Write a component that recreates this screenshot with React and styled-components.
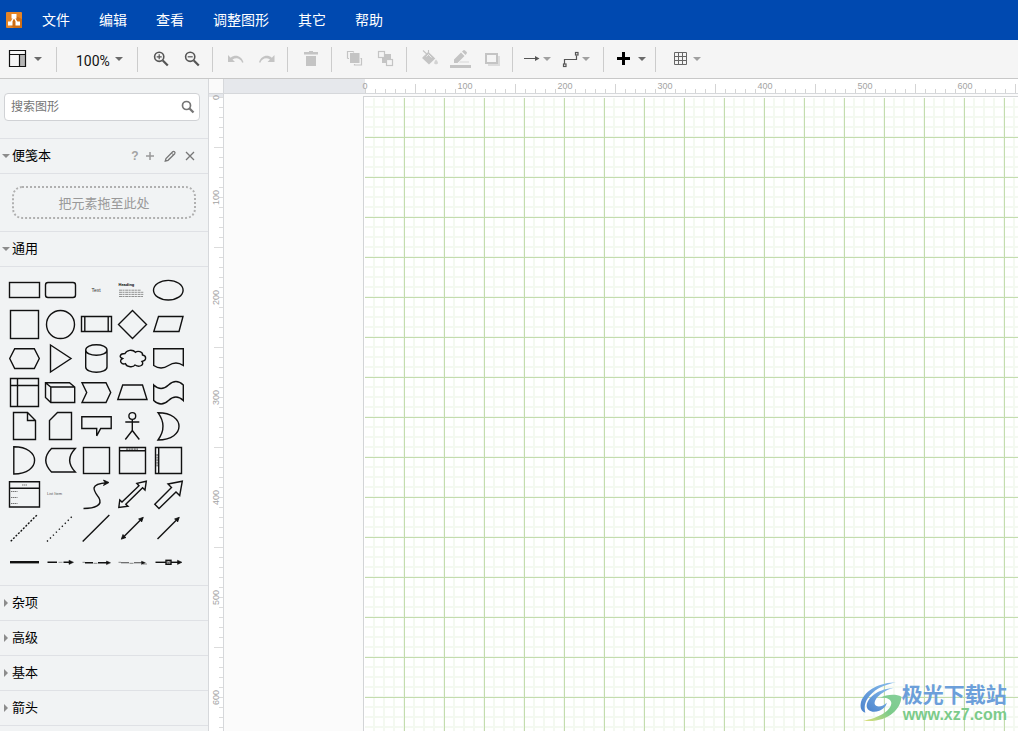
import React, { useState } from 'react';
import styled, { createGlobalStyle } from 'styled-components';

const GlobalStyle = createGlobalStyle`
  * {
    box-sizing: border-box;
  }

  body {
    margin: 0;
    font-family: "Liberation Sans", "Noto Sans CJK SC", sans-serif;
    color: #000;
  }

  button {
    font-family: inherit;
    border: none;
    background: none;
    padding: 0;
    cursor: pointer;
  }
`;

const Shell = styled.div`
  height: 100vh;
  display: flex;
  flex-direction: column;
  overflow: hidden;
`;

const MenuBar = styled.nav`
  flex: none;
  height: 40px;
  display: flex;
  align-items: center;
  gap: 29px;
  padding-left: 6px;
  background: #0049b0;
`;

const Logo = styled.svg`
  width: 16px;
  height: 16px;
  margin-right: -9px;
`;

const MenuItem = styled.button`
  font-size: 14px;
  line-height: 20px;
  color: #fff;
`;

const Toolbar = styled.div`
  flex: none;
  height: 39px;
  display: flex;
  align-items: center;
  background: #f5f5f5;
  border-bottom: 1px solid #c8c8c8;
`;

const ToolGroup = styled.div`
  height: 25px;
  display: flex;
  align-items: center;
  padding: 0 4px 0 8px;
  border-right: ${props => props.$last ? 'none' : '1px solid #ccc'};
`;

const ViewGroup = styled(ToolGroup)`
  padding: 0 14px 0 7px;
`;

const ZoomGroup = styled(ToolGroup)`
  padding: 0 14px 0 19px;
`;

const Tool = styled.button`
  width: 31px;
  height: 30px;
  display: flex;
  align-items: center;
  justify-content: center;
  color: ${props => props.disabled ? '#c4c4c4' : '#555'};
`;

const DropTool = styled(Tool)`
  width: ${props => props.$width || 39}px;
  justify-content: flex-start;
  gap: ${props => props.$gap}px;
  padding-left: ${props => props.$inset || 0}px;
`;

const ToolIcon = styled.svg`
  flex: none;
  width: 21px;
  height: 22px;
  overflow: visible;
`;

const Caret = styled.span`
  flex: none;
  border: 4px solid transparent;
  border-top-color: ${props => props.$light ? '#a0a0a0' : '#6b6b6b'};
  border-bottom: none;
`;

const ZoomLabel = styled.span`
  font-family: Roboto, sans-serif;
  font-size: 14px;
  line-height: 20px;
  padding-top: 3px;
  color: #111;
`;

const Workspace = styled.div`
  flex: 1;
  min-height: 0;
  display: grid;
  grid-template-columns: 209px 1fr;
`;

const Sidebar = styled.aside`
  background: #f1f3f4;
  border-right: 1px solid #d6d8db;
  overflow: hidden;
`;

const SearchArea = styled.div`
  padding: 14px 8px 17px 4px;
  border-bottom: 1px solid #dfe1e5;
`;

const SearchBox = styled.label`
  height: 28px;
  display: flex;
  align-items: center;
  padding: 0 4px 0 6px;
  background: #fff;
  border: 1px solid #d0d2d5;
  border-radius: 4px;
`;

const SearchInput = styled.input`
  flex: 1;
  min-width: 0;
  padding: 0;
  border: none;
  outline: none;
  background: none;
  font-family: "Liberation Sans", "Noto Sans CJK SC", sans-serif;
  font-size: 12px;

  &::placeholder {
    color: #757575;
  }
`;

const SearchIcon = styled.svg`
  width: 14px;
  height: 14px;
`;

const SectionHeader = styled.div`
  height: 35px;
  display: flex;
  align-items: center;
  justify-content: space-between;
  padding-right: 12px;
  border-bottom: 1px solid #dfe1e5;
`;

const SectionTitle = styled.button`
  display: flex;
  align-items: center;
  font-size: 13px;
  line-height: 20px;
  color: #000;
`;

const Twisty = styled.svg`
  width: 8px;
  height: 8px;
  margin: 0 2px;
  fill: #8c8c8c;
`;

const SectionActions = styled.div`
  display: flex;
  gap: 8px;
`;

const SmallAction = styled.button`
  width: 12px;
  height: 14px;
  font-size: 12px;
  font-weight: 700;
  line-height: 14px;
  color: #a3a3a3;

  &:first-child {
    margin-right: -5px;
  }

  svg {
    display: block;
    width: 12px;
    height: 14px;
    fill: none;
    stroke: #777;
    overflow: visible;
  }
`;

const ScratchArea = styled.div`
  padding: 12px;
  border-bottom: 1px solid #dfe1e5;
`;

const DropZone = styled.div`
  height: 33px;
  display: flex;
  align-items: center;
  justify-content: center;
  border: 2px dotted #b0b0b0;
  border-radius: 10px;
  font-size: 13px;
  color: #999;
`;

const Palette = styled.div`
  display: grid;
  grid-template-columns: repeat(5, 36px);
  grid-auto-rows: 34px;
  padding: 6px 6px 6px;
  border-bottom: 1px solid #dfe1e5;
`;

const ShapeButton = styled.button`
  svg {
    display: block;
    width: 36px;
    height: 34px;
    fill: none;
    stroke: #111;
    stroke-width: 1.4;
  }

  text {
    font-size: 5px;
    fill: #333;
    stroke: none;
  }

  .solid {
    fill: #111;
  }
`;

const Editor = styled.main`
  min-width: 0;
  min-height: 0;
  display: grid;
  grid-template-columns: 15px 1fr;
  grid-template-rows: 15px 1fr;
`;

const RulerCorner = styled.div`
  background: #fafafa;
  border-right: 1px solid #d6d8db;
  border-bottom: 1px solid #d6d8db;
`;

const RulerTop = styled.div`
  display: flex;
  overflow: hidden;
  padding-left: 91px;
  border-bottom: 1px solid #d6d8db;
  background:
    linear-gradient(#e6e8ec, #e6e8ec) 0 0 / 141px 100% no-repeat,
    linear-gradient(to right, #d4d4d4 1px, transparent 1px) 191px 100% / 100px 9px repeat-x,
    linear-gradient(to right, #d4d4d4 1px, transparent 1px) 141px 100% / 10px 4px repeat-x,
    #fff;
`;

const RulerLeft = styled.div`
  display: flex;
  flex-direction: column;
  min-height: 0;
  overflow: hidden;
  border-right: 1px solid #d6d8db;
  background:
    linear-gradient(#e6e8ec, #e6e8ec) 0 0 / 100% 3px no-repeat,
    linear-gradient(#dcdcdc 1px, transparent 1px) 100% 53px / 9px 100px repeat-y,
    linear-gradient(#dcdcdc 1px, transparent 1px) 100% 3px / 4px 10px repeat-y,
    #fff;
`;

const RulerMark = styled.span`
  flex: none;
  width: 100px;
  font-size: 9px;
  line-height: 15px;
  text-align: center;
  color: #a3a3a3;
`;

const RulerMarkLeft = styled(RulerMark)`
  width: 14px;
  height: 100px;
  line-height: 14px;
  writing-mode: vertical-rl;
  transform: rotate(180deg);

  &:first-child {
    margin-top: -47px;
  }
`;

const Canvas = styled.div`
  position: relative;
  min-width: 0;
  min-height: 0;
  display: flex;
  padding: 2px 0 0 139px;
  background: #fbfbfb;
`;

/* the inset shadow keeps the first grid lines off the page edge */
const Page = styled.div`
  flex: 1;
  border-top: 1px solid #d2d4d6;
  border-left: 1px solid #d2d4d6;
  box-shadow: inset 1px 1px #fff;
  background:
    linear-gradient(#c3dcae 1px, transparent 1px) 0 0 / 40px 40px,
    linear-gradient(to right, #c3dcae 1px, transparent 1px) 0 0 / 40px 40px,
    linear-gradient(#f4f9f1 2px, transparent 2px) -1px -1px / 10px 10px,
    linear-gradient(to right, #f4f9f1 2px, transparent 2px) -1px -1px / 10px 10px,
    #fff;
`;

const Watermark = styled.div`
  position: absolute;
  right: 11px;
  bottom: 7px;
  display: flex;
  align-items: center;

  svg {
    width: 42px;
    height: 42px;
  }
`;

const WatermarkName = styled.div`
  font-family: "Noto Sans CJK SC", sans-serif;
  font-size: 21px;
  font-weight: 700;
  line-height: 26px;
  color: #6c9fda;
`;

const WatermarkUrl = styled.div`
  font-size: 16px;
  font-weight: 700;
  line-height: 18px;
  padding-left: 1px;
  color: #7ccb8a;
`;

const MENUS = ['文件', '编辑', '查看', '调整图形', '其它', '帮助'];
const CLOSED_SECTIONS = ['杂项', '高级', '基本', '箭头'];
const MARKS = [0, 100, 200, 300, 400, 500, 600];

const SHAPES = [
  { name: 'Rectangle', art: <rect x="3.5" y="9.5" width="30" height="15" /> },
  { name: 'Rounded Rectangle', art: <rect x="3.5" y="9.5" width="30" height="15" rx="2.5" /> },
  { name: 'Text', art: <text x="18" y="19" textAnchor="middle">Text</text> },
  {
    name: 'Textbox',
    art: (
      <>
        <text x="4.5" y="13" fontWeight="bold" style={{ fontSize: 4, fill: '#000' }}>Heading</text>
        <path
          d="M5 17.2H27M5 19.3H30M5 21.4H30M5 23.5H29"
          strokeWidth=".8"
          strokeDasharray="3 .5 2 .7"
          stroke="#777"
        />
      </>
    ),
  },
  { name: 'Ellipse', art: <ellipse cx="18.3" cy="17.2" rx="14.8" ry="9.8" /> },

  { name: 'Square', art: <rect x="4.5" y="3.5" width="28" height="28" /> },
  { name: 'Circle', art: <circle cx="18.5" cy="17.5" r="14" /> },
  { name: 'Process', art: <path d="M3.5 9.5H33.5V24.5H3.5ZM6.8 9.5V24.5M30.2 9.5V24.5" /> },
  { name: 'Diamond', art: <path d="M18.5 3.5 32.5 17.5 18.5 31.5 4.5 17.5Z" /> },
  { name: 'Parallelogram', art: <path d="M8.5 9.5H33L29 24.5H3.8Z" /> },

  { name: 'Hexagon', art: <path d="M3.7 17.5 8.7 7.7H28.3L33.3 17.5 28.3 27.5H8.7Z" /> },
  { name: 'Triangle', art: <path d="M8.5 4 29 17.5 8.5 31Z" /> },
  {
    name: 'Cylinder',
    art: <path d="M7.7 9C7.7 2 29 2 29 9V26C29 33 7.7 33 7.7 26ZM7.7 9C7.7 16 29 16 29 9" />,
  },
  {
    name: 'Cloud',
    art: <path d="M11 12.5C6 12.5 4.5 16 8.5 17.5 4.5 19.5 7.5 24 11.5 22.7 13 26.5 19.5 26.5 21 24 26 27 30.5 23.5 28 20.5 33 19.5 32.5 14.5 28.5 14 29 10.5 23.5 9.5 21.5 11.3 18.5 8 12.5 9 11 12.5Z" />,
  },
  { name: 'Document', art: <path d="M3.7 7.7H33.3V24.5Q26 19.5 18.5 24.5T3.7 24.5Z" /> },

  { name: 'Internal Storage', art: <path d="M4.5 3.5H32.5V31.5H4.5ZM4.5 10.5H32.5M11.5 3.5V31.5" /> },
  { name: 'Cube', art: <path d="M3.5 7.7H27.5L32.7 12V27.5H8.8L3.5 22.5ZM3.5 7.7 8.8 12H32.7M8.8 12V27.5" /> },
  { name: 'Step', art: <path d="M4 7.7H28L32.7 17.5 28 27.5H4L8.7 17.5Z" /> },
  { name: 'Trapezoid', art: <path d="M8.7 10H28.5L33 24.5H3.8Z" /> },
  { name: 'Tape', art: <path d="M3.7 10Q11 17 18.5 10T33.3 10V25.5Q26 18.5 18.5 25.5T3.7 25.5Z" /> },

  { name: 'Note', art: <path d="M7.5 3.5H21.5L29.5 11.5V30.5H7.5ZM21.5 3.5V11.5H29.5" /> },
  { name: 'Card', art: <path d="M15.5 3.5H29.5V30.5H7.5V11.5Z" /> },
  { name: 'Callout', art: <path d="M3.8 7.7H33.2V19.5H22.7L18.7 26.8V19.5H3.8Z" /> },
  {
    name: 'Actor',
    art: (
      <>
        <circle cx="18.3" cy="7" r="3.4" />
        <path d="M18.3 10.5V21.5M11.3 13H25.3M18.3 21.5 11.3 30.5M18.3 21.5 25.3 30.5" />
      </>
    ),
  },
  { name: 'Or', art: <path d="M8 3.7C36 3.7 36 31 8 31Q18 17.5 8 3.7Z" /> },

  { name: 'And', art: <path d="M7.8 3.7C35.5 3.7 35.5 31 7.8 31Z" /> },
  { name: 'Data Storage', art: <path d="M9.5 5.5H33.3Q22 17.3 33.3 29H9.5Q-2 17.3 9.5 5.5Z" /> },
  { name: 'Container', art: <rect x="5.5" y="4.5" width="26" height="26" /> },
  {
    name: 'Vertical Container',
    art: (
      <>
        <path d="M5.5 4.5H31.5V30.5H5.5ZM5.5 7.7H31.5" />
        <path d="M12 6.1H24" strokeDasharray="2 .6" strokeWidth=".8" />
      </>
    ),
  },
  {
    name: 'Horizontal Container',
    art: (
      <>
        <path d="M5.5 4.5H31.5V30.5H5.5ZM8.7 4.5V30.5" />
        <path d="M7.1 11V24" strokeDasharray="2 .6" strokeWidth=".8" />
      </>
    ),
  },

  {
    name: 'List',
    art: (
      <>
        <path d="M3.5 4.7H33.5V30H3.5ZM3.5 11.3H33.5" />
        <path d="M16 8H21M5 14.5H11.5M5 20.5H11.5M5 26.5H11.5" strokeWidth="1" stroke="#777" strokeDasharray="1.5 .5" />
      </>
    ),
  },
  { name: 'List Item', art: <text x="5" y="18" style={{ fontSize: 4, fill: '#555' }}>List Item</text> },
  {
    name: 'Curve',
    art: (
      <>
        <path d="M5.5 31.5C17 31.5 25 28 21 21 17 15 9 7 29 5.7" />
        <path className="solid" d="M31 5.5 25.5 3 27 5.8 25.5 8.5Z" strokeWidth=".8" />
      </>
    ),
  },
  {
    name: 'Bidirectional Arrow',
    art: <path d="M4.8 30.5 5.8 23 8 25 25 8.7 22.8 6.3 32.3 4.2 31 13 28.6 10.7 11.8 27.2 14 29.3Z" />,
  },
  {
    name: 'Arrow',
    art: <path d="M4.8 27.3 21.5 10.5 18 7 32.3 4.2 29.7 18.5 26 15 9 31.5Z" />,
  },

  { name: 'Dashed Line', art: <path d="M4.7 30.3 31.3 3.7" strokeDasharray="2 1.5" /> },
  { name: 'Dotted Line', art: <path d="M5 30.5 31 4.5" strokeDasharray="1.3 2.9" /> },
  { name: 'Line', art: <path d="M4.7 30.5 31.3 4" /> },
  {
    name: 'Bidirectional Connector',
    art: (
      <>
        <path d="M8.5 27 28 7.5" />
        <path className="solid" d="M7.3 28.2 9 23.5 10 25.5 12 26.5ZM29.3 6.3 27.6 11 26.6 9 24.6 8Z" strokeWidth=".8" />
      </>
    ),
  },
  {
    name: 'Directional Connector',
    art: (
      <>
        <path d="M7.5 28 28 7.5" />
        <path className="solid" d="M29.3 6.3 27.6 11 26.6 9 24.6 8Z" strokeWidth=".8" />
      </>
    ),
  },

  { name: 'Link', art: <path d="M4 17.2H33" strokeWidth="2.4" /> },
  {
    name: 'Connector with Label',
    art: (
      <>
        <path d="M5.5 17.3H15M21.5 17.3H29" />
        <path d="M16.5 17.3H20.5" stroke="#999" strokeWidth="1" />
        <path className="solid" d="M31.5 17.3 27 15.2V19.4Z" strokeWidth=".5" />
      </>
    ),
  },
  {
    name: 'Connector with 2 Labels',
    art: (
      <>
        <path d="M7 17.8H15M20 17.8H29" />
        <path d="M4.5 17.3H7M15.5 18.3H19.5" stroke="#888" strokeWidth="1" />
        <path className="solid" d="M32.5 17.8 28.5 16V19.6Z" strokeWidth=".5" />
      </>
    ),
  },
  {
    name: 'Connector with 3 Labels',
    art: (
      <>
        <path d="M7 17.8H15M20 17.8H28" stroke="#444" strokeWidth="1.1" />
        <path d="M4.5 17.3H7M15.5 18.3H19.5M29 19H33" stroke="#888" strokeWidth="1" />
        <path className="solid" d="M31.5 17.8 27.5 16V19.6Z" strokeWidth=".3" />
      </>
    ),
  },
  {
    name: 'Connector with Symbol',
    art: (
      <>
        <path d="M5.5 17.3H29" />
        <rect x="16" y="15.3" width="5" height="4" fill="#bbb" />
        <path d="M17.2 16.8 18.5 17.8 19.8 16.8" strokeWidth=".7" />
        <path className="solid" d="M32 17.3 27.5 15.2V19.4Z" strokeWidth=".5" />
      </>
    ),
  },
];

const LayoutIcon = () => (
  <ToolIcon fill="none" stroke="#111" strokeWidth="1.2">
    <rect x="13" y="7" width="5" height="11" fill="#b5b5b5" stroke="none" />
    <path d="M2.5 2.5H18.5V18.5H2.5ZM2.5 6.5H18.5M12.5 6.5V18.5" />
  </ToolIcon>
);

const ZoomIcon = ({ plus }) => (
  <ToolIcon fill="none" stroke="currentColor">
    <circle cx="8.2" cy="8.8" r="4.6" strokeWidth="1.6" />
    <path d="M11.8 12.4 16.8 17.5" strokeWidth="2.2" />
    <path d={plus ? 'M5.7 8.8H10.7M8.2 6.3V11.3' : 'M5.7 8.8H10.7'} strokeWidth="1.2" />
  </ToolIcon>
);

const UndoIcon = () => (
  <ToolIcon fill="currentColor">
    <path d="M2 7V14H9L6.5 11.5C10 9 14.5 10 16.2 14.8L17.5 14.3C15.5 7.5 9 6 4.7 9.7Z" />
  </ToolIcon>
);

const RedoIcon = () => (
  <ToolIcon fill="currentColor">
    <path d="M17.5 7V14H10.5L13 11.5C9.5 9 5 10 3.3 14.8L2 14.3C4 7.5 10.5 6 14.8 9.7Z" />
  </ToolIcon>
);

const TrashIcon = () => (
  <ToolIcon fill="currentColor">
    <path d="M8 3H12V4H17V6.5H3V4H8ZM5 8H15V18H5Z" />
  </ToolIcon>
);

const ToFrontIcon = () => (
  <ToolIcon fill="none" stroke="currentColor" strokeWidth="1.2">
    <rect x="5" y="5" width="9.5" height="10" fill="currentColor" stroke="none" />
    <path d="M2.5 10.5V3.5H8.5M2.5 10.500H4M8.5 3.500V4.500M15.500 10.500H16.5V17H9.500V16" />
  </ToolIcon>
);

const ToBackIcon = () => (
  <ToolIcon fill="none" stroke="currentColor" strokeWidth="1.2">
    <rect x="6" y="6" width="9" height="9" fill="currentColor" stroke="none" />
    <rect x="2.5" y="3.5" width="6" height="6" fill="#f5f5f5" />
    <rect x="10.5" y="11.5" width="6" height="6" fill="#f5f5f5" />
  </ToolIcon>
);

const FillIcon = () => (
  <ToolIcon fill="currentColor">
    <path d="M9 4.5 15.3 10.5 9 16.5 2.3 10.3Z" />
    <path d="M3 2.5 10.5 9.5M8.5 2V8M2.7 10 8.5 4.5" fill="none" stroke="currentColor" strokeWidth="1.1" />
    <path d="M6.5 8.5 8.5 6.5 11.5 9.5" fill="none" stroke="#f5f5f5" strokeWidth=".8" />
    <path d="M16 11.5C19.5 15.5 17.5 16.3 16 16.3S12.8 15.5 16 11.5Z" opacity=".7" />
  </ToolIcon>
);

const PenIcon = () => (
  <ToolIcon fill="currentColor">
    <path d="M3 15V11.5L10 4.5 13.5 8 6.5 15ZM11 3.5 12.5 2.2Q13.2 1.7 14 2.4L15.7 4Q16.3 4.8 15.7 5.5L14.5 7Z" />
    <path d="M9 13.5H18V14.5H8Z" opacity=".6" />
    <path d="M-1 17H20V20H-1Z" />
  </ToolIcon>
);

const ShadowIcon = () => (
  <ToolIcon fill="none">
    <path d="M6 8H18V18H6Z" fill="#dcdcdc" />
    <rect x="4" y="6" width="11" height="9" fill="#f5f5f5" stroke="currentColor" strokeWidth="2" />
  </ToolIcon>
);

const ConnectionIcon = () => (
  <ToolIcon fill="currentColor">
    <path d="M3 10H14V8L18.5 10.5 14 13V11H3Z" />
  </ToolIcon>
);

const WaypointsIcon = () => (
  <ToolIcon fill="none" stroke="currentColor" strokeWidth="1.2">
    <path d="M4.5 16V11.5H16.5V7.5" />
    <rect x="3.5" y="16" width="2.5" height="2.5" />
    <rect x="15.5" y="4.5" width="2.5" height="2.5" />
  </ToolIcon>
);

const InsertIcon = () => (
  <ToolIcon fill="none" stroke="#000" strokeWidth="3">
    <path d="M5 10.5H18M11.5 4V17" />
  </ToolIcon>
);

const TableIcon = () => (
  <ToolIcon fill="none" stroke="#666" strokeWidth="1">
    <path d="M4.5 4.5H16.5V16.5H4.5ZM8.5 4.5V16.5M12.5 4.5V16.5M4.5 8.5H16.5M4.5 12.5H16.5" />
  </ToolIcon>
);

const SectionToggle = ({ title, open, onClick }) => (
  <SectionTitle onClick={onClick} aria-expanded={open}>
    <Twisty viewBox="0 0 8 8">
      <path d={open ? 'M0 2H8L4 6Z' : 'M2 0 6 4 2 8Z'} />
    </Twisty>
    {title}
  </SectionTitle>
);

const App = () => {
  const [query, setQuery] = useState('');
  const [showGeneral, setShowGeneral] = useState(true);

  return (
    <Shell>
      <GlobalStyle />

      <MenuBar>
        <Logo viewBox="0 0 16 16">
          <rect width="16" height="16" rx="1" fill="#e58425" />
          <path d="M16 7V15Q16 16 15 16H8L3 13 10 4Z" fill="#cf6e15" />
          <path d="M8 5 4.5 11.5M8 5 11.5 11.5" stroke="#fff" strokeWidth="1.5" />
          <path d="M5.5 2H10.5V6.5H5.5ZM2 9.5H6.5V13.5H2ZM9.5 9.5H14V13.5H9.5Z" fill="#fff" />
        </Logo>
        {MENUS.map(menu => (
          <MenuItem key={menu}>{menu}</MenuItem>
        ))}
      </MenuBar>

      <Toolbar>
        <ViewGroup>
          <DropTool $width={35} $gap={6} aria-label="View"><LayoutIcon /><Caret /></DropTool>
        </ViewGroup>
        <ZoomGroup>
          <DropTool $width={47} $gap={5} aria-label="Zoom"><ZoomLabel>100%</ZoomLabel><Caret /></DropTool>
        </ZoomGroup>
        <ToolGroup>
          <Tool aria-label="Zoom In"><ZoomIcon plus /></Tool>
          <Tool aria-label="Zoom Out"><ZoomIcon /></Tool>
        </ToolGroup>
        <ToolGroup>
          <Tool disabled aria-label="Undo"><UndoIcon /></Tool>
          <Tool disabled aria-label="Redo"><RedoIcon /></Tool>
        </ToolGroup>
        <ToolGroup>
          <Tool disabled aria-label="Delete"><TrashIcon /></Tool>
        </ToolGroup>
        <ToolGroup>
          <Tool disabled aria-label="To Front"><ToFrontIcon /></Tool>
          <Tool disabled aria-label="To Back"><ToBackIcon /></Tool>
        </ToolGroup>
        <ToolGroup>
          <Tool disabled aria-label="Fill Color"><FillIcon /></Tool>
          <Tool disabled aria-label="Line Color"><PenIcon /></Tool>
          <Tool disabled aria-label="Shadow"><ShadowIcon /></Tool>
        </ToolGroup>
        <ToolGroup>
          <DropTool $gap={1} aria-label="Connection"><ConnectionIcon /><Caret $light /></DropTool>
          <DropTool $gap={1} aria-label="Waypoints"><WaypointsIcon /><Caret $light /></DropTool>
        </ToolGroup>
        <ToolGroup>
          <DropTool $gap={5} aria-label="Insert"><InsertIcon /><Caret /></DropTool>
        </ToolGroup>
        <ToolGroup $last>
          <DropTool $width={43} $inset={6} $gap={2} aria-label="Table"><TableIcon /><Caret $light /></DropTool>
        </ToolGroup>
      </Toolbar>

      <Workspace>
        <Sidebar>
          <SearchArea>
            <SearchBox>
              <SearchInput
                type="text"
                placeholder="搜索图形"
                aria-label="搜索图形"
                value={query}
                onChange={(e) => setQuery(e.target.value)}
              />
              <SearchIcon viewBox="0 0 14 14" fill="none" stroke="#757575">
                <circle cx="5.5" cy="5.5" r="4" strokeWidth="1.7" />
                <path d="M8.5 8.5 12.5 12.5" strokeWidth="2.3" />
              </SearchIcon>
            </SearchBox>
          </SearchArea>

          <SectionHeader>
            <SectionToggle title="便笺本" open />
            <SectionActions>
              <SmallAction aria-label="Help">?</SmallAction>
              <SmallAction aria-label="Add">
                <svg><path d="M2 7H10M6 3V11" stroke="#999" strokeWidth="1.5" /></svg>
              </SmallAction>
              <SmallAction aria-label="Edit">
                <svg>
                  <path d="M1.3 12 2 9.5 8.7 2.8Q9.5 2 10.5 2.8T10.700 4.700L4 11.300Z" strokeWidth="1.3" />
                  <path d="M7.5 4 9.5 6" />
                </svg>
              </SmallAction>
              <SmallAction aria-label="Close">
                <svg><path d="M2 3 10 11M10 3 2 11" strokeWidth="1.3" /></svg>
              </SmallAction>
            </SectionActions>
          </SectionHeader>
          <ScratchArea>
            <DropZone>把元素拖至此处</DropZone>
          </ScratchArea>

          <SectionHeader>
            <SectionToggle title="通用" open={showGeneral} onClick={() => setShowGeneral(prev => !prev)} />
          </SectionHeader>
          {showGeneral && (
            <Palette>
              {SHAPES.map(shape => (
                <ShapeButton key={shape.name} aria-label={shape.name}>
                  <svg viewBox="0 0 36 34">{shape.art}</svg>
                </ShapeButton>
              ))}
            </Palette>
          )}

          {CLOSED_SECTIONS.map(title => (
            <SectionHeader key={title}>
              <SectionToggle title={title} open={false} />
            </SectionHeader>
          ))}
        </Sidebar>

        <Editor>
          <RulerCorner />
          <RulerTop>
            {MARKS.map(mark => <RulerMark key={mark}>{mark}</RulerMark>)}
          </RulerTop>
          <RulerLeft>
            {MARKS.map(mark => <RulerMarkLeft key={mark}>{mark}</RulerMarkLeft>)}
          </RulerLeft>
          <Canvas>
            <Page />
            <Watermark>
              <svg viewBox="10 15 126 126">
                <defs>
                  <linearGradient id="swirlBlue" x1="0" y1="1" x2="1" y2="0">
                    <stop offset="0" stopColor="#4a82cc" />
                    <stop offset="1" stopColor="#8cc0ee" />
                  </linearGradient>
                  <linearGradient id="swirlGreen" x1="0" y1="1" x2="1" y2="0">
                    <stop offset="0" stopColor="#dfe07a" />
                    <stop offset=".5" stopColor="#7ccb8a" />
                    <stop offset="1" stopColor="#86cf9a" />
                  </linearGradient>
                </defs>
                <path d="M118 19C72 20 26 40 13 78 9 96 14 106 26 110 20 88 28 68 48 50 68 32 92 26 118 19Z" fill="url(#swirlBlue)" />
                <path d="M112 35C70 38 34 60 30 88 29 106 50 112 68 104 82 98 90 88 90 80 80 92 58 96 54 84 52 64 84 42 112 35Z" fill="url(#swirlBlue)" />
                <path d="M70 66C90 54 120 54 134 62 134 100 90 142 20 134 62 128 102 106 104 82 104 70 90 64 70 66Z" fill="url(#swirlGreen)" />
              </svg>
              <div>
                <WatermarkName>极光下载站</WatermarkName>
                <WatermarkUrl>www.xz7.com</WatermarkUrl>
              </div>
            </Watermark>
          </Canvas>
        </Editor>
      </Workspace>
    </Shell>
  );
};

export default App;
